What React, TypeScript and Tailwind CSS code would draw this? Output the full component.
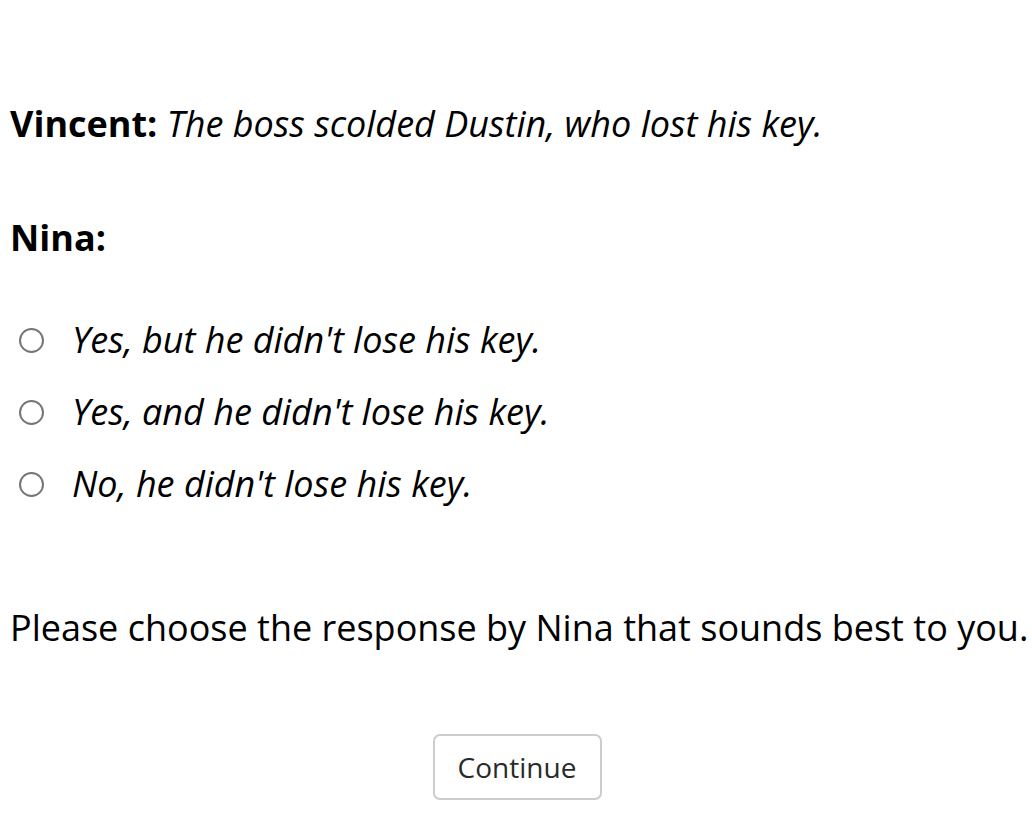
const OPTIONS = [
  "Yes, but he didn't lose his key.",
  "Yes, and he didn't lose his key.",
  "No, he didn't lose his key.",
];

export default function App() {
  return (
    <div className="min-h-screen bg-white pl-[10px] pt-[100px] font-['Open_Sans',sans-serif] text-[36px] leading-[48px] text-black">
      <p>
        <span className="font-bold">Vincent:</span>{" "}
        <span className="italic">The boss scolded Dustin, who lost his key.</span>
      </p>

      <p className="mt-[66px] font-bold">Nina:</p>

      <div className="mt-[54px] flex flex-col gap-[24px]">
        {OPTIONS.map((opt) => (
          <label key={opt} className="flex items-center">
            <span className="ml-[9px] h-[25px] w-[25px] rounded-full border-2 border-[#767676] bg-white" />
            <span className="ml-[28px] italic">{opt}</span>
          </label>
        ))}
      </div>

      <p className="mt-[96px] whitespace-nowrap">Please choose the response by Nina that sounds best to you.</p>

      <div className="mt-[82px] flex justify-center pr-[10px]">
        <button className="ml-[2px] h-[66px] w-[169px] rounded-[7px] border-2 border-[#cccccc] bg-white text-[28px] text-[#2a2a2a]">
          Continue
        </button>
      </div>
    </div>
  );
}
